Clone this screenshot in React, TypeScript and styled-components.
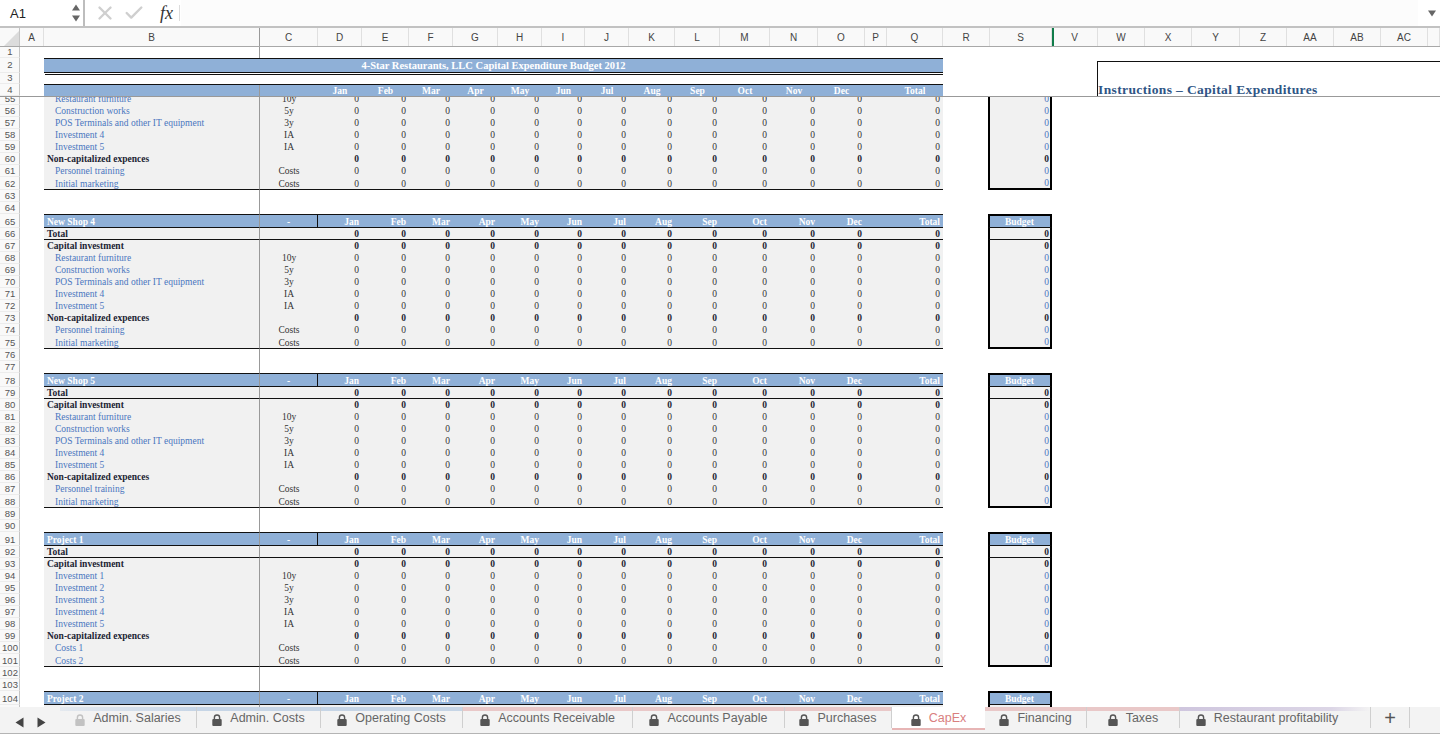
import React from "react";
import styled, { createGlobalStyle } from "styled-components";
import { X, Check } from "lucide-react";

const SERIF = `"Liberation Serif", "Times New Roman", serif`;
const SANS = `"Liberation Sans", Arial, sans-serif`;
const BLUE = "#8fb0d7";
const GREY = "#f1f1f1";
const LINK = "#4a76c0";
const INK = "#1c2433";

const GRID = "20px 24px 216px 58px 44px 47px 44px 45px 44px 43px 44px 46px 45px 50px 48px 47px 22px 56px 47px 62px 1fr";

const GlobalStyle = createGlobalStyle`
  html, body { margin: 0; padding: 0; background: #fff; overflow: hidden; }
  #root { height: 734px; }
`;

const Sheet = styled.div`
  display: flex;
  flex-direction: column;
  width: 1440px;
  height: 734px;
  overflow: hidden;
  font-family: ${SANS};
`;

/* formula bar */
const FormulaBar = styled.div`
  display: flex;
  align-items: center;
  height: 26px;
  flex: none;
  background: #f4f4f4;
`;
const NameBox = styled.div`
  position: relative;
  display: flex;
  align-items: center;
  width: 85px;
  height: 26px;
  padding-left: 10px;
  box-sizing: border-box;
  background: #fff;
  border-right: 2px solid #bdbdbd;
  font-size: 13px;
  color: #222;
`;
const Stepper = styled.svg`
  position: absolute;
  right: 2px;
  top: 3px;
`;
const FormulaActions = styled.div`
  display: flex;
  align-items: center;
  width: 96px;
  height: 26px;
  box-sizing: border-box;
  padding-left: 9px;
  gap: 7px;
  background: #fff;
  color: #cfcfcf;
`;
const FxLabel = styled.span`
  margin-left: 8px;
  padding-right: 6px;
  border-right: 1px solid #dcdcdc;
  font-family: ${SERIF};
  font-style: italic;
  font-size: 18px;
  line-height: 16px;
  color: #333;
`;
const FormulaInput = styled.div`
  flex: 1;
  height: 26px;
  display: flex;
  align-items: center;
  justify-content: flex-end;
  padding-right: 3px;
  background: linear-gradient(90deg, #fcfcfc 0, #fcfcfc 1237px, #fff 1237px);
`;

/* column header */
const ColumnBar = styled.div`
  display: flex;
  height: 21px;
  flex: none;
  box-sizing: border-box;
  border-top: 2px solid #c2c2c2;
  border-bottom: 1px solid #a8a8a8;
  background: #f9f9f9;
`;
const Corner = styled.div`
  width: 20px;
  flex: none;
  display: flex;
  align-items: flex-end;
  justify-content: flex-end;
  box-sizing: border-box;
  border-right: 1px solid #c4c4c4;
`;
const ColumnCell = styled.div<{ $w?: number; $frozen?: boolean; $selected?: boolean }>`
  ${(p) => (p.$w ? `width: ${p.$w}px; flex: none;` : "flex: 1;")}
  box-sizing: border-box;
  display: flex;
  align-items: center;
  justify-content: center;
  font-size: 10px;
  color: #444;
  border-right: 1px solid ${(p) => (p.$frozen ? "#999" : "#e0e0e0")};
  ${(p) => (p.$selected ? "box-shadow: 2px 0 0 #107c4a;" : "")}
`;

/* rows */
const Pane = styled.div`
  display: flex;
  flex: none;
  height: 50px;
  box-sizing: border-box;
  border-bottom: 1px solid #999;
`;
const FrozenRows = styled.div`
  flex: none;
  width: 943px;
  display: flex;
  flex-direction: column;
`;
const InstructionBox = styled.div`
  flex: 1;
  margin: 14px 0 0 154px;
  display: flex;
  align-items: flex-end;
  box-sizing: border-box;
  border-top: 1px solid #111;
  border-left: 1px solid #111;
  font-family: ${SERIF};
  font-weight: 700;
  font-size: 13.5px;
  line-height: 13px;
  letter-spacing: 0.38px;
  color: #2f5585;
`;
const ScrollPane = styled.div`
  flex: none;
  height: 610px;
  overflow: hidden;
`;
const ScrollContent = styled.div`
  margin-top: -4px;
`;
const FrozenRow = styled.div<{ $h: number }>`
  display: grid;
  grid-template-columns: 20px 24px 216px 683px;
  grid-template-rows: 100%;
  height: ${(p) => p.$h}px;
`;
const Row = styled.div<{ $h: number }>`
  display: grid;
  grid-template-columns: ${GRID};
  grid-template-rows: 100%;
  height: ${(p) => p.$h}px;
  font-family: ${SERIF};
  font-size: 9.5px;
  line-height: 10px;
`;
const RowNum = styled.div<{ $low?: boolean }>`
  display: flex;
  align-items: center;
  justify-content: center;
  box-sizing: border-box;
  overflow: hidden;
  padding: ${(p) => (p.$low ? "2px" : "0")} 0 0 1px;
  background: #f9f9f9;
  border-right: 1px solid #c4c4c4;
  border-bottom: 1px solid #ececec;
  font-family: ${SANS};
  font-size: 9.5px;
  line-height: 10px;
  color: #555;
`;
const Empty = styled.div``;

type Kind = "head" | "total" | "section" | "item" | "last" | "blank";

const band = (k: Kind) => {
  if (k === "blank") return "";
  if (k === "head")
    return `background:${BLUE};color:#fff;font-weight:700;border-top:1px solid #111;border-bottom:1px solid #111;padding-top:2px;`;
  if (k === "total")
    return `background:${GREY};color:${INK};font-weight:700;border-bottom:1px solid #111;padding-top:1px;`;
  if (k === "section") return `background:${GREY};color:${INK};font-weight:700;`;
  if (k === "last") return `background:${GREY};color:#333;border-bottom:1px solid #111;padding-top:1px;`;
  return `background:${GREY};color:#333;`;
};

const Label = styled.div<{ $kind: Kind }>`
  ${(p) => band(p.$kind)}
  box-sizing: border-box;
  display: flex;
  align-items: center;
  white-space: nowrap;
  overflow: hidden;
  padding-left: ${(p) => (p.$kind === "item" || p.$kind === "last" ? 11 : 3)}px;
  border-right: 1px solid #999;
  ${(p) => (p.$kind === "item" || p.$kind === "last" ? `color: ${LINK};` : "")}
`;
const Unit = styled.div<{ $kind: Kind }>`
  ${(p) => band(p.$kind)}
  box-sizing: border-box;
  display: flex;
  align-items: center;
  justify-content: center;
  ${(p) => (p.$kind === "head" ? "border-right: 1px solid #111;" : "")}
`;
const Num = styled.div<{ $kind: Kind }>`
  ${(p) => band(p.$kind)}
  box-sizing: border-box;
  display: flex;
  align-items: center;
  justify-content: flex-end;
  padding-right: 3px;
`;
const Budget = styled.div<{ $kind: Kind }>`
  ${(p) => band(p.$kind)}
  box-sizing: border-box;
  margin-left: -2px;
  display: flex;
  align-items: center;
  justify-content: ${(p) => (p.$kind === "head" ? "center" : "flex-end")};
  padding-right: 1px;
  ${(p) => (p.$kind === "blank" ? "" : "border-left: 2px solid #000; border-right: 2px solid #000;")}
  ${(p) => (p.$kind === "item" || p.$kind === "last" ? `color: ${LINK};` : "")}
  ${(p) => (p.$kind === "head" ? "border-top: 2px solid #000; padding-top: 1px;" : "")}
  ${(p) => (p.$kind === "last" ? "border-bottom: 2px solid #000; padding-top: 0;" : "")}
`;

/* frozen header */
const TitleStrip = styled.div`
  grid-column: 3 / 5;
  display: flex;
  align-items: center;
  justify-content: center;
  box-sizing: border-box;
  background: ${BLUE};
  border-top: 1px solid #111;
  border-bottom: 1px solid #111;
  color: #fff;
  font-family: ${SERIF};
  font-weight: 700;
  font-size: 10.5px;
  line-height: 11px;
`;
const DoubleRule = styled.div`
  grid-column: 3 / 5;
  margin: 1px 0 0 1px;
  border-top: 1px solid #111;
`;
const MonthBand = styled.div`
  grid-column: 3 / 5;
  display: grid;
  grid-template-columns: 216px 58px 44px 47px 44px 45px 44px 43px 44px 46px 45px 50px 48px 47px 22px 56px;
  grid-template-rows: 100%;
  background: ${BLUE};
  border-top: 1px solid #111;
  box-sizing: border-box;
  color: #fff;
  font-family: ${SERIF};
  font-weight: 700;
  font-size: 9.5px;
  line-height: 10px;
`;
const MonthCell = styled.div`
  display: flex;
  align-items: center;
  justify-content: center;
  &:first-child { border-right: 1px solid #999; }
`;
const VLine = styled.div`
  grid-column: 3;
  border-right: 1px solid #999;
`;

/* tabs */
const TabBar = styled.div`
  flex: none;
  display: flex;
  height: 27px;
  box-sizing: border-box;
  background: #f3f3f3;
  border-bottom: 1px solid #b4b4b4;
  padding-bottom: 1px;
  color: #666;
`;
const TabNav = styled.div`
  width: 60px;
  flex: none;
  display: flex;
  align-items: center;
  padding: 6px 0 0 15px;
  box-sizing: border-box;
  gap: 13px;
  color: #444;
`;
const Tab = styled.div<{ $w: number; $strip?: string; $active?: boolean; $trail?: number }>`
  width: ${(p) => p.$w}px;
  height: ${(p) => (p.$active ? 23 : 21)}px;
  flex: none;
  display: flex;
  align-items: flex-start;
  justify-content: center;
  gap: 8px;
  box-sizing: border-box;
  padding: 4px ${(p) => p.$trail ?? 0}px 0 0;
  font-size: 12.5px;
  line-height: 15px;
  white-space: nowrap;
  color: ${(p) => (p.$active ? "#d9807f" : "#666")};
  background: ${(p) =>
    p.$active
      ? "linear-gradient(#fff, #fff) top/100% 21px no-repeat, #e7b5b5"
      : `linear-gradient(90deg, ${p.$strip}) top/100% 4px no-repeat`};
  border-right: ${(p) => (p.$active ? "none" : "1px solid #cfcfcf")};
`;
const LockIcon = styled.svg<{ $faded?: boolean }>`
  flex: none;
  margin-top: 3px;
  color: #555;
  opacity: ${(p) => (p.$faded ? 0.3 : 1)};
`;
const AddTab = styled.div`
  width: 39px;
  height: 21px;
  flex: none;
  box-sizing: border-box;
  display: flex;
  align-items: flex-end;
  justify-content: center;
  font-size: 20px;
  line-height: 20px;
  color: #555;
  border-right: 1px solid #cfcfcf;
`;

const MONTHS = ["Jan", "Feb", "Mar", "Apr", "May", "Jun", "Jul", "Aug", "Sep", "Oct", "Nov", "Dec"];

type Item = [string, string];
const SHOP: Item[] = [
  ["Restaurant furniture", "10y"],
  ["Construction works", "5y"],
  ["POS Terminals and other IT equipment", "3y"],
  ["Investment 4", "IA"],
  ["Investment 5", "IA"],
];
const SHOP_COST: Item[] = [
  ["Personnel training", "Costs"],
  ["Initial marketing", "Costs"],
];
const PROJECT: Item[] = [
  ["Investment 1", "10y"],
  ["Investment 2", "5y"],
  ["Investment 3", "3y"],
  ["Investment 4", "IA"],
  ["Investment 5", "IA"],
];
const PROJECT_COST: Item[] = [
  ["Costs 1", "Costs"],
  ["Costs 2", "Costs"],
];

type RowData = { n: number; kind: Kind; label?: string; unit?: string };

const blockRows = (start: number, name: string, items: Item[], costs: Item[]): RowData[] => {
  const out: RowData[] = [
    { n: start, kind: "head", label: name, unit: "-" },
    { n: start + 1, kind: "total", label: "Total" },
    { n: start + 2, kind: "section", label: "Capital investment" },
  ];
  items.forEach(([label, unit], i) => out.push({ n: start + 3 + i, kind: "item", label, unit }));
  out.push({ n: start + 8, kind: "section", label: "Non-capitalized expences" });
  costs.forEach(([label, unit], i) =>
    out.push({ n: start + 9 + i, kind: i === costs.length - 1 ? "last" : "item", label, unit })
  );
  out.push({ n: start + 11, kind: "blank" }, { n: start + 12, kind: "blank" });
  return out;
};

const ROWS: RowData[] = [
  ...blockRows(52, "", SHOP, SHOP_COST).slice(3),
  ...blockRows(65, "New Shop 4", SHOP, SHOP_COST),
  ...blockRows(78, "New Shop 5", SHOP, SHOP_COST),
  ...blockRows(91, "Project 1", PROJECT, PROJECT_COST),
  ...blockRows(104, "Project 2", SHOP, SHOP_COST).slice(0, 2),
];

const COLUMNS: [string, number][] = [
  ["A", 24], ["B", 216], ["C", 58], ["D", 44], ["E", 47], ["F", 44], ["G", 45], ["H", 44],
  ["I", 43], ["J", 44], ["K", 46], ["L", 45], ["M", 50], ["N", 48], ["O", 47], ["P", 22],
  ["Q", 56], ["R", 47], ["S", 62], ["V", 46], ["W", 47], ["X", 47], ["Y", 48], ["Z", 47],
  ["AA", 47], ["AB", 47], ["AC", 47],
];

const TABS: { name: string; w: number; strip: string; active?: boolean; faded?: boolean; trail?: number }[] = [
  { name: "Admin. Salaries", w: 137, strip: "#e4e9ef, #c6d5e6", faded: true },
  { name: "Admin. Costs", w: 124, strip: "#c6d5e6, #c6d5e6" },
  { name: "Operating Costs", w: 142, strip: "#c6d5e6, #c6d5e6" },
  { name: "Accounts Receivable", w: 170, strip: "#e9c8c8, #e9c8c8" },
  { name: "Accounts Payable", w: 152, strip: "#e9c8c8, #e9c8c8" },
  { name: "Purchases", w: 107, strip: "#e9c8c8, #e9c8c8" },
  { name: "CapEx", w: 93, strip: "#fff, #fff", active: true },
  { name: "Financing", w: 102, strip: "#e9c8c8, #e9c8c8" },
  { name: "Taxes", w: 93, strip: "#e9c8c8, #e9c8c8" },
  { name: "Restaurant profitability", w: 191, strip: "#cfc6de, #dcd6e6 80%, #f3f3f3", trail: 16 },
];

const Lock = ({ faded }: { faded?: boolean }) => (
  <LockIcon $faded={faded} width="10" height="12" viewBox="0 0 10 12">
    <path d="M2.4 6V3.6a2.6 2.6 0 0 1 5.2 0V6" fill="none" stroke="currentColor" strokeWidth="1.4" />
    <rect x="0.3" y="5" width="9.4" height="7" rx="1" fill="currentColor" />
  </LockIcon>
);

const SheetRow = ({ row }: { row: RowData }) => {
  const { n, kind, label, unit } = row;
  const h = kind === "head" ? 14 : kind === "last" ? 13 : 12;
  const low = kind === "head" || kind === "last";
  if (kind === "blank") {
    return (
      <Row $h={h}>
        <RowNum>{n}</RowNum>
        <Empty />
        <Label $kind="blank" />
      </Row>
    );
  }
  const values = kind === "head" ? MONTHS : MONTHS.map(() => "0");
  return (
    <Row $h={h}>
      <RowNum $low={low}>{n}</RowNum>
      <Empty />
      <Label $kind={kind}>{label}</Label>
      <Unit $kind={kind}>{unit}</Unit>
      {values.map((v, i) => (
        <Num key={i} $kind={kind}>{v}</Num>
      ))}
      <Num $kind={kind} />
      <Num $kind={kind}>{kind === "head" ? "Total" : "0"}</Num>
      <Empty />
      <Budget $kind={kind}>{kind === "head" ? "Budget" : "0"}</Budget>
    </Row>
  );
};

export default function App() {
  return (
    <Sheet>
      <GlobalStyle />
      <FormulaBar>
        <NameBox>
          A1
          <Stepper width="10" height="20" viewBox="0 0 10 20">
            <path d="M5 1.5 9 7.5H1Z M5 18.5 1 12.5H9Z" fill="#666" />
          </Stepper>
        </NameBox>
        <FormulaActions>
          <X size={22} strokeWidth={2.6} />
          <Check size={22} strokeWidth={2.6} />
          <FxLabel>fx</FxLabel>
        </FormulaActions>
        <FormulaInput>
          <svg width="10" height="7" viewBox="0 0 10 7">
            <path d="M1 0.5H9L5 6.5Z" fill="#666" />
          </svg>
        </FormulaInput>
      </FormulaBar>

      <ColumnBar>
        <Corner>
          <svg width="15" height="15" viewBox="0 0 15 15">
            <path d="M15 0V15H0Z" fill="#dcdcdc" />
          </svg>
        </Corner>
        {COLUMNS.map(([name, w]) => (
          <ColumnCell key={name} $w={w} $frozen={name === "B"} $selected={name === "S"}>
            {name}
          </ColumnCell>
        ))}
        <ColumnCell />
      </ColumnBar>

      <Pane>
        <FrozenRows>
          <FrozenRow $h={11}>
            <RowNum>1</RowNum>
            <Empty />
            <VLine />
          </FrozenRow>
          <FrozenRow $h={15}>
            <RowNum>2</RowNum>
            <Empty />
            <TitleStrip>4-Star Restaurants, LLC Capital Expenditure Budget 2012</TitleStrip>
          </FrozenRow>
          <FrozenRow $h={11}>
            <RowNum>3</RowNum>
            <Empty />
            <DoubleRule />
          </FrozenRow>
          <FrozenRow $h={12}>
            <RowNum>4</RowNum>
            <Empty />
            <MonthBand>
              <MonthCell />
              <MonthCell />
              {MONTHS.map((m) => (
                <MonthCell key={m}>{m}</MonthCell>
              ))}
              <MonthCell />
              <MonthCell>Total</MonthCell>
            </MonthBand>
          </FrozenRow>
        </FrozenRows>
        <InstructionBox>Instructions – Capital Expenditures</InstructionBox>
      </Pane>

      <ScrollPane>
        <ScrollContent>
          {ROWS.map((r) => (
            <SheetRow key={r.n} row={r} />
          ))}
        </ScrollContent>
      </ScrollPane>

      <TabBar>
        <TabNav>
          <svg width="9" height="11" viewBox="0 0 9 11">
            <path d="M8.5 0.5V10.5L0.5 5.5Z" fill="currentColor" />
          </svg>
          <svg width="9" height="11" viewBox="0 0 9 11">
            <path d="M0.5 0.5V10.5L8.5 5.5Z" fill="currentColor" />
          </svg>
        </TabNav>
        {TABS.map((t) => (
          <Tab key={t.name} $w={t.w} $strip={t.strip} $active={t.active} $trail={t.trail}>
            <Lock faded={t.faded} />
            {t.name}
          </Tab>
        ))}
        <AddTab>+</AddTab>
      </TabBar>
    </Sheet>
  );
}
